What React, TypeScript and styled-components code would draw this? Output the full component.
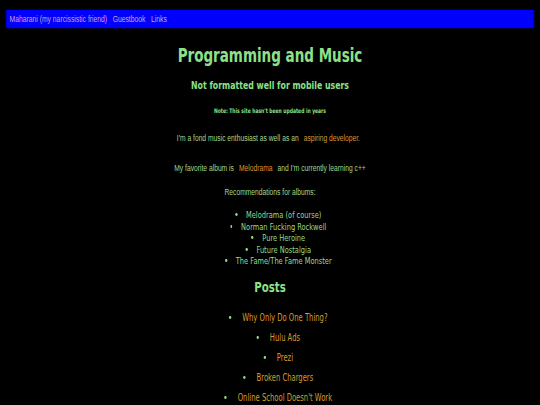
import React from "react";
import styled, { createGlobalStyle } from "styled-components";

// the page is laid out at a wider width and squeezed to fit, as in the shot
const SQUEEZE = 0.7895;

const GlobalStyle = createGlobalStyle`
  html, body {
    margin: 0;
    padding: 0;
    background: #000;
    overflow: hidden;
  }
  body {
    font-family: "DejaVu Sans Condensed", "DejaVu Sans", sans-serif;
  }
`;

const albums = [
  "Melodrama (of course)",
  "Norman Fucking Rockwell",
  "Pure Heroine",
  "Future Nostalgia",
  "The Fame/The Fame Monster",
];

const posts = [
  "Why Only Do One Thing?",
  "Hulu Ads",
  "Prezi",
  "Broken Chargers",
  "Online School Doesn't Work",
];

const Page = styled.div`
  width: ${540 / SQUEEZE}px;
  box-sizing: border-box;
  padding: 10px 8px 0;
  transform: scaleX(${SQUEEZE});
  transform-origin: 0 0;
`;

const Nav = styled.nav`
  display: flex;
  align-items: center;
  gap: 7px;
  height: 18px;
  padding: 0 4px;
  background: #0000ff;
  box-shadow: 0 0 2px #0000aa;
`;

const NavLink = styled.a`
  font-family: "Liberation Sans", Arial, sans-serif;
  font-size: 8.6px;
  color: #d0a0d8;
  text-decoration: none;
`;

const Main = styled.main`
  display: flex;
  flex-direction: column;
  align-items: center;
  text-align: center;
`;

const Title = styled.h1`
  margin: 15px 0 0;
  font-size: 19px;
  line-height: 24px;
  font-weight: bold;
  color: #8ee08a;
`;

const Subtitle = styled.h2`
  margin: 12px 0 0;
  font-size: 11px;
  line-height: 14px;
  font-weight: bold;
  color: #8ee08a;
`;

const Note = styled.h6`
  margin: 14px 0 0;
  font-size: 6.3px;
  line-height: 8px;
  font-weight: bold;
  color: #8ee08a;
`;

const Para = styled.p<{ $gap: number }>`
  margin: ${(p) => p.$gap}px 0 0;
  font-family: "Liberation Sans", Arial, sans-serif;
  font-size: 8.5px;
  line-height: 12px;
  color: #a6d68c;
`;

const Link = styled.a`
  margin: 0 4px;
  color: #d99833;
  text-decoration: none;
`;

const List = styled.ul<{ $gap: number }>`
  margin: ${(p) => p.$gap}px 0 0;
  padding: 0 0 0 21px;
  list-style: none;
`;

const Bullet = styled.li`
  display: flex;
  align-items: center;
  justify-content: center;

  &::before {
    content: "";
    width: 2.8px;
    height: 2.8px;
    border-radius: 50%;
    background: #8ee08a;
  }
`;

const AlbumItem = styled(Bullet)`
  gap: 11px;
  height: 11.5px;
  font-size: 9.4px;
  color: #98da8a;
`;

const Heading = styled.h2`
  margin: 11px 0 0;
  font-size: 14.4px;
  line-height: 18px;
  font-weight: bold;
  color: #8ee08a;
`;

const PostItem = styled(Bullet)`
  gap: 14px;
  height: 20px;
`;

const PostLink = styled.a`
  font-size: 9.6px;
  color: #d49c2c;
  text-decoration: none;
`;

export default function App() {
  return (
    <>
      <GlobalStyle />
      <Page>
        <Nav>
          <NavLink>Maharani (my narcissistic friend)</NavLink>
          <NavLink>Guestbook</NavLink>
          <NavLink>Links</NavLink>
        </Nav>
        <Main>
          <Title>Programming and Music</Title>
          <Subtitle>Not formatted well for mobile users</Subtitle>
          <Note>Note: This site hasn't been updated in years</Note>
          <Para $gap={17}>
            I'm a fond music enthusiast as well as an{" "}
            <Link>aspiring developer.</Link>
          </Para>
          <Para $gap={18}>
            My favorite album is <Link>Melodrama</Link> and I'm currently
            learning c++
          </Para>
          <Para $gap={12}>Recommendations for albums:</Para>
          <List $gap={11}>
            {albums.map((a) => (
              <AlbumItem key={a}>{a}</AlbumItem>
            ))}
          </List>
          <Heading>Posts</Heading>
          <List $gap={12}>
            {posts.map((p) => (
              <PostItem key={p}>
                <PostLink>{p}</PostLink>
              </PostItem>
            ))}
          </List>
        </Main>
      </Page>
    </>
  );
}
